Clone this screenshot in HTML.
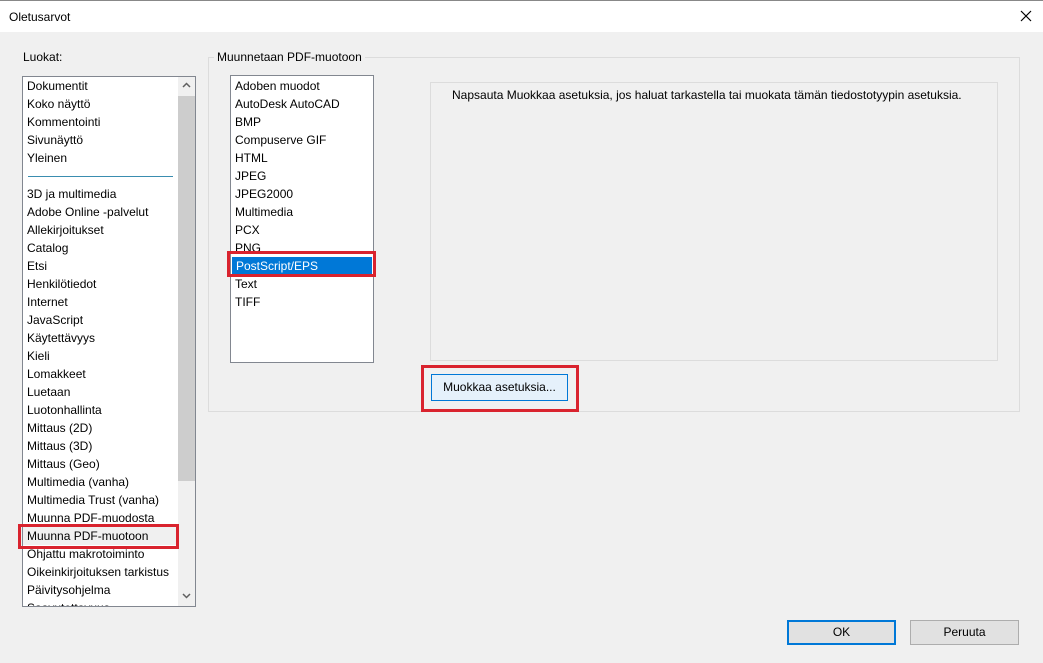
<!DOCTYPE html>
<html><head><meta charset="utf-8"><style>
*{margin:0;padding:0;box-sizing:border-box}
body{width:1043px;height:663px;background:#f0f0f0;font-family:"Liberation Sans",sans-serif;font-size:12px;color:#000;position:relative;overflow:hidden}
.a{position:absolute}
.title{left:0;top:0;width:1043px;height:32px;background:#fff;border-top:1px solid #888}
.list div{height:18px;line-height:18px;padding-left:4px;white-space:nowrap}
</style></head><body>
<div class="a title"><span class="a" style="left:9px;top:9px">Oletusarvot</span>
<svg class="a" style="left:1020px;top:9px" width="12" height="12"><path d="M1 1L11 11M11 1L1 11" stroke="#000" stroke-width="1.2"/></svg></div>
<span class="a" style="left:23px;top:50px">Luokat:</span>
<div class="a list" style="left:22px;top:76px;width:174px;height:531px;background:#fff;border:1px solid #828790;overflow:hidden">
<div class="a" style="left:155px;top:0;width:17px;height:529px;background:#f0f0f0;padding:0"></div>
<div class="a" style="left:155px;top:19px;width:17px;height:385px;background:#cdcdcd;padding:0"></div>
<svg class="a" style="left:159px;top:5px" width="9" height="6"><path d="M1 5L4.5 1.5L8 5" stroke="#606060" stroke-width="1.5" fill="none"/></svg>
<svg class="a" style="left:159px;top:516px" width="9" height="6"><path d="M1 1L4.5 4.5L8 1" stroke="#606060" stroke-width="1.5" fill="none"/></svg>
<div class="a" style="left:0;top:0;width:155px;padding:0">
<div style="padding-left:4px">Dokumentit</div><div style="padding-left:4px">Koko näyttö</div><div style="padding-left:4px">Kommentointi</div><div style="padding-left:4px">Sivunäyttö</div><div style="padding-left:4px">Yleinen</div>
<div style="padding:0;position:relative"><div style="position:absolute;left:5px;right:5px;top:9px;height:1px;background:#3a8db0;padding:0"></div></div>
<div style="padding-left:4px">3D ja multimedia</div><div style="padding-left:4px">Adobe Online -palvelut</div><div style="padding-left:4px">Allekirjoitukset</div><div style="padding-left:4px">Catalog</div><div style="padding-left:4px">Etsi</div><div style="padding-left:4px">Henkilötiedot</div><div style="padding-left:4px">Internet</div><div style="padding-left:4px">JavaScript</div><div style="padding-left:4px">Käytettävyys</div><div style="padding-left:4px">Kieli</div><div style="padding-left:4px">Lomakkeet</div><div style="padding-left:4px">Luetaan</div><div style="padding-left:4px">Luotonhallinta</div><div style="padding-left:4px">Mittaus (2D)</div><div style="padding-left:4px">Mittaus (3D)</div><div style="padding-left:4px">Mittaus (Geo)</div><div style="padding-left:4px">Multimedia (vanha)</div><div style="padding-left:4px">Multimedia Trust (vanha)</div><div style="padding-left:4px">Muunna PDF-muodosta</div><div style="padding-left:4px;background:#f0f0f0">Muunna PDF-muotoon</div><div style="padding-left:4px">Ohjattu makrotoiminto</div><div style="padding-left:4px">Oikeinkirjoituksen tarkistus</div><div style="padding-left:4px">Päivitysohjelma</div><div style="padding-left:4px">Saavutettavuus</div>
</div></div>
<div class="a" style="left:18px;top:524px;width:161px;height:25px;border:3px solid #d9232e"></div>
<div class="a" style="left:208px;top:57px;width:812px;height:355px;border:1px solid #dcdcdc"></div>
<span class="a" style="left:214px;top:50px;background:#f0f0f0;padding:0 3px">Muunnetaan PDF-muotoon</span>
<div class="a list" style="left:230px;top:75px;width:144px;height:288px;background:#fff;border:1px solid #828790;padding-top:1px">
<div>Adoben muodot</div><div>AutoDesk AutoCAD</div><div>BMP</div><div>Compuserve GIF</div><div>HTML</div><div>JPEG</div><div>JPEG2000</div><div>Multimedia</div><div>PCX</div><div>PNG</div><div style="background:#0078d7;color:#fff;margin:0 1px">PostScript/EPS</div><div>Text</div><div>TIFF</div></div>
<div class="a" style="left:227px;top:251px;width:149px;height:26px;border:3px solid #d9232e"></div>
<div class="a" style="left:430px;top:82px;width:568px;height:279px;border:1px solid #dcdcdc"></div>
<span class="a" style="left:452px;top:88px">Napsauta Muokkaa asetuksia, jos haluat tarkastella tai muokata tämän tiedostotyypin asetuksia.</span>
<div class="a" style="left:431px;top:374px;width:137px;height:27px;background:#e5f1fb;border:1px solid #0078d7;text-align:center;line-height:25px">Muokkaa asetuksia...</div>
<div class="a" style="left:421px;top:365px;width:158px;height:47px;border:3px solid #d9232e"></div>
<div class="a" style="left:787px;top:620px;width:109px;height:25px;background:#e1e1e1;border:2px solid #0078d7;text-align:center;line-height:21px">OK</div>
<div class="a" style="left:910px;top:620px;width:109px;height:25px;background:#e1e1e1;border:1px solid #adadad;text-align:center;line-height:23px">Peruuta</div>
</body></html>
